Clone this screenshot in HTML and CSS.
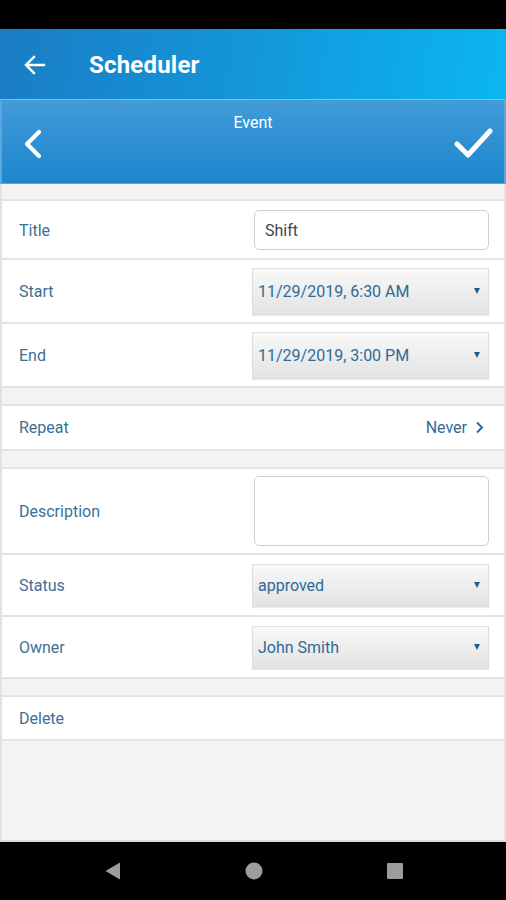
FILE: index.html
```html
<!DOCTYPE html>
<html>
<head>
<meta charset="utf-8">
<link rel="stylesheet" href="styles.css">
</head>
<body>
<div class="screen">
  <div class="status"></div>
  <div class="appbar">
    <svg class="appbar-back" width="22" height="20" viewBox="0 0 22 20"><path d="M20 10H3M10 2L2 10l8 8" fill="none" stroke="#fff" stroke-width="2.4" stroke-linecap="square"/></svg>
    <span class="appbar-title">Scheduler</span>
  </div>
  <div class="frame">
    <div class="event-header">
      <svg class="hdr-back" width="20" height="30" viewBox="0 0 20 30"><path d="M16 3L4 15l12 12" fill="none" stroke="#fff" stroke-width="4.2" stroke-linecap="round" stroke-linejoin="round"/></svg>
      <span class="hdr-title">Event</span>
      <svg class="hdr-ok" width="40" height="32" viewBox="0 0 40 32"><path d="M4 17l11 11L37 4" fill="none" stroke="#fff" stroke-width="5" stroke-linecap="round" stroke-linejoin="round"/></svg>
    </div>
    <div class="form">
      <div class="group">
        <div class="row row-title">
          <span class="label">Title</span>
          <div class="input">Shift</div>
        </div>
        <div class="row row-date">
          <span class="label">Start</span>
          <div class="select select-tall"><span>11/29/2019, 6:30 AM</span><i class="caret"></i></div>
        </div>
        <div class="row row-date">
          <span class="label">End</span>
          <div class="select select-tall"><span>11/29/2019, 3:00 PM</span><i class="caret"></i></div>
        </div>
      </div>
      <div class="group">
        <div class="row row-link">
          <span class="label">Repeat</span>
          <span class="link">Never
            <svg width="9" height="13" viewBox="0 0 9 13"><path d="M2 1.5l5 5-5 5" fill="none" stroke="#2f6b98" stroke-width="2"/></svg>
          </span>
        </div>
      </div>
      <div class="group">
        <div class="row row-desc">
          <span class="label">Description</span>
          <div class="textarea"></div>
        </div>
        <div class="row row-sel">
          <span class="label">Status</span>
          <div class="select"><span>approved</span><i class="caret"></i></div>
        </div>
        <div class="row row-sel">
          <span class="label">Owner</span>
          <div class="select"><span>John Smith</span><i class="caret"></i></div>
        </div>
      </div>
      <div class="group">
        <div class="row row-del">
          <span class="label">Delete</span>
        </div>
      </div>
    </div>
  </div>
  <div class="navbar">
    <svg width="16" height="18" viewBox="0 0 16 18"><path d="M15 0.5V17.5L0.5 9z" fill="#9d9d9d"/></svg>
    <svg width="18" height="18" viewBox="0 0 18 18"><circle cx="9" cy="9" r="8.5" fill="#9d9d9d"/></svg>
    <svg width="16" height="16" viewBox="0 0 16 16"><rect x="0" y="0" width="16" height="16" rx="1" fill="#9d9d9d"/></svg>
  </div>
</div>
</body>
</html>
```
FILE: styles.css
```css
* { box-sizing: border-box; }
html, body { margin: 0; padding: 0; }
body { font-family: Roboto, "Liberation Sans", Arial, sans-serif; background: #000; }
.screen { width: 506px; height: 900px; display: flex; flex-direction: column; overflow: hidden; }
.status { height: 29px; background: #000; flex: none; }
.appbar {
  height: 70px; flex: none;
  background: linear-gradient(100deg, #1a7cc4 0%, #1494d8 45%, #0bb6f1 100%);
  display: flex; align-items: center;
}
.appbar-back { margin-left: 24px; margin-right: 43px; margin-top: 2px; }
.appbar-title { color: #fff; font-size: 24px; font-weight: 700; letter-spacing: 0.2px; margin-top: 2px; }
.frame { flex: 1; display: flex; flex-direction: column; background: #f3f3f3; }
.event-header {
  height: 85px; flex: none; position: relative;
  border-top: 1px solid #7fc0ea;
  border-left: 2px solid #58a8de; border-right: 2px solid #58a8de;
  border-bottom: 1px solid #5aa6dc;
  background: linear-gradient(to bottom, #429cd8 0%, #2f90d3 50%, #1f86cc 100%);
}
.hdr-title {
  position: absolute; left: 0; right: 0; top: 13px; text-align: center;
  color: #fff; font-size: 16px;
}
.hdr-back { position: absolute; left: 21px; top: 29px; }
.hdr-ok { position: absolute; right: 11px; top: 27px; }
.form {
  flex: 1; border-left: 2px solid #e2e2e2; border-right: 2px solid #e2e2e2;
  border-bottom: 2px solid #dcdcdc; padding-top: 15px;
}
.group { background: #fff; border-top: 2px solid #e4e4e4; margin-bottom: 16px; }
.row {
  display: flex; align-items: center; justify-content: space-between;
  border-bottom: 2px solid #e4e4e4; padding-left: 17px; padding-right: 15px;
}
.label { color: #3d6f95; font-size: 16px; }
.row-title { height: 59px; padding-top: 1px; }
.row-date { height: 64px; }
.row-link { height: 45px; padding-right: 20px; }
.row-desc { height: 86px; }
.row-sel { height: 62px; }
.row-del { height: 44px; }
.input {
  width: 235px; height: 40px; border: 1px solid #cfcfcf; border-radius: 5px;
  background: #fff; color: #444; font-size: 16px; padding-left: 10px;
  display: flex; align-items: center;
}
.textarea {
  width: 235px; height: 70px; border: 1px solid #cfcfcf; border-radius: 5px; background: #fff;
}
.select {
  width: 237px; height: 43px; margin-right: 0;
  border: 1px solid #dedede;
  background: linear-gradient(to bottom, #f8f8f8 0%, #e3e3e3 100%);
  box-shadow: 0 1px 1px rgba(0,0,0,0.08);
  display: flex; align-items: center; justify-content: space-between;
  padding-left: 5px; padding-right: 8px;
  color: #2f6a96; font-size: 16px;
}
.select-tall { height: 47px; }
.caret {
  width: 0; height: 0; border-left: 3.5px solid transparent; border-right: 3.5px solid transparent;
  border-top: 6px solid #1d5f8f;
}
.link { color: #2f6b98; font-size: 16px; display: flex; align-items: center; gap: 8px; }
.navbar {
  height: 58px; flex: none; background: #000;
  display: flex; align-items: center; justify-content: center; gap: 0;
}
.navbar svg:nth-child(1) { margin-right: 124px; margin-left: 2px; }
.navbar svg:nth-child(2) { margin-right: 124px; }
```
